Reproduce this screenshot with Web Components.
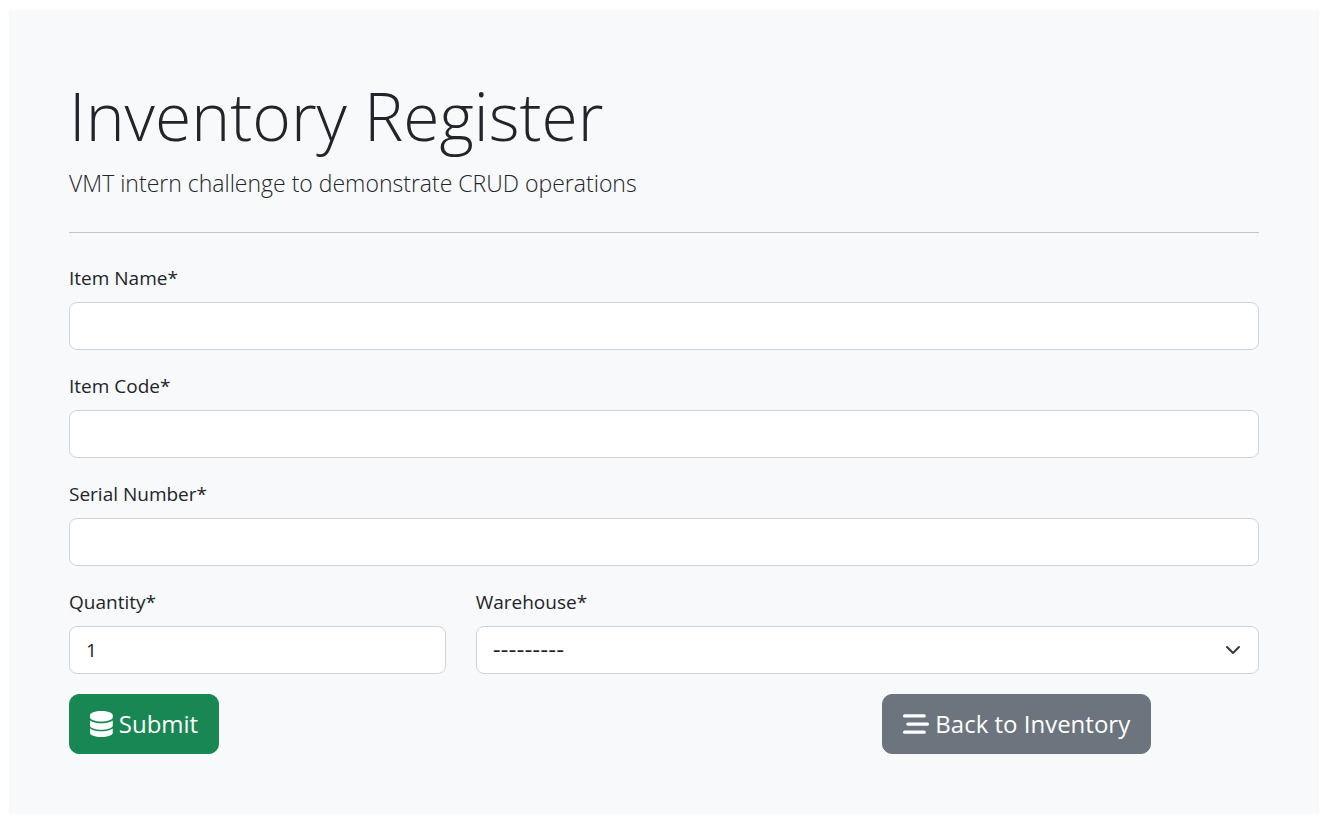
<!DOCTYPE html>
<html lang="en">
<head>
<meta charset="utf-8">
<meta name="viewport" content="width=device-width, initial-scale=1">
<title>Inventory Register</title>
<style>
  body {
    margin: 10px 11px 10px 9px;
    background: #fff;
    color: #212529;
    font-family: "Segoe UI", "Open Sans", "Noto Sans", sans-serif;
    font-size: 19px;
    line-height: 30px;
  }
</style>
</head>
<body>
<inventory-page></inventory-page>

<script>
class BaseElement extends HTMLElement {
  render(html) {
    const template = document.createElement('template');
    template.innerHTML = html;
    this.attachShadow({ mode: 'open' }).append(template.content.cloneNode(true));
  }
}

const controlStyle = `
  :host { display: block; margin-bottom: 20px; }
  label { display: block; margin-bottom: 8px; line-height: 32px; }
  input, select {
    display: block; box-sizing: border-box; width: 100%; height: 48px;
    margin: 0; padding: 0 16px; border: 1px solid #ced4da; border-radius: 8px;
    background-color: #fff; color: inherit; font: inherit; appearance: none;
  }
  input:focus, select:focus { outline: 0; border-color: #86b7fe; box-shadow: 0 0 0 4px #0d6efd40; }
`;

/* Page heading with a slotted subtitle */
customElements.define('page-header', class extends BaseElement {
  connectedCallback() {
    this.render(`
      <style>
        :host { display: block; border-bottom: 1px solid #c1c3c5; padding-bottom: 30px; margin-bottom: 29px; }
        h1 { margin: 0 0 4px; font-size: 66px; line-height: 90px; font-weight: 300; }
        p { margin: 0; font-size: 23px; line-height: 38px; font-weight: 300; }
      </style>
      <h1><slot name="title"></slot></h1>
      <p><slot></slot></p>`);
  }
});

/* Labelled text or number input */
customElements.define('text-field', class extends BaseElement {
  connectedCallback() {
    this.render(`
      <style>${controlStyle}
        input::-webkit-inner-spin-button { appearance: none; margin: 0; }
      </style>
      <label for="control"></label>
      <input id="control" required>`);
    this.shadowRoot.querySelector('label').textContent = this.getAttribute('label') + '*';
    const input = this.shadowRoot.querySelector('input');
    input.type = this.getAttribute('type') || 'text';
    input.value = this.getAttribute('value') || '';
  }
});

/* Labelled drop-down */
customElements.define('select-field', class extends BaseElement {
  connectedCallback() {
    this.render(`
      <style>${controlStyle}
        .box { display: grid; align-items: center; }
        .box > * { grid-area: 1 / 1; }
        select { font-family: "DejaVu Sans", sans-serif; font-size: 22px; }
        svg { justify-self: end; width: 16px; height: 16px; margin-right: 18px; pointer-events: none; }
      </style>
      <label for="control"></label>
      <div class="box">
        <select id="control" required><option value="">---------</option></select>
        <svg viewBox="0 0 16 16" aria-hidden="true"><path d="m2 5 6 6 6-6" fill="none" stroke="#343a40" stroke-width="2" stroke-linecap="round" stroke-linejoin="round"/></svg>
      </div>`);
    this.shadowRoot.querySelector('label').textContent = this.getAttribute('label') + '*';
  }
});

const actionStyle = `
  :host { display: inline-block; vertical-align: top; }
  button, a {
    display: inline-flex; align-items: center; gap: 6px; box-sizing: border-box;
    height: 60px; margin: 0; padding: 0 20px; border: 1px solid; border-radius: 10px;
    color: #fff; font: inherit; font-size: 24px; line-height: 38px;
    text-decoration: none; white-space: nowrap; cursor: pointer;
  }
  svg { height: 26px; fill: #fff; flex: none; }
`;

customElements.define('submit-button', class extends BaseElement {
  connectedCallback() {
    this.render(`
      <style>${actionStyle} button { background: #198754; border-color: #198754; }</style>
      <button type="submit">
        <svg viewBox="0 0 448 512" aria-hidden="true"><path d="M448 80v48c0 44.200-100.300 80-224 80S0 172.200 0 128V80C0 35.800 100.300 0 224 0s224 35.800 224 80zM393.200 214.700c20.800-7.400 39.900-16.900 54.800-28.600V288c0 44.200-100.300 80-224 80S0 332.200 0 288V186.100c14.900 11.800 34 21.200 54.800 28.600C99.700 230.700 159.500 240 224 240s124.300-9.300 169.200-25.300zM0 346.100c14.900 11.800 34 21.200 54.800 28.600C99.700 390.700 159.500 400 224 400s124.300-9.300 169.200-25.300c20.800-7.400 39.900-16.900 54.800-28.600V432c0 44.200-100.300 80-224 80S0 476.200 0 432V346.100z"/></svg>
        <span><slot></slot></span>
      </button>`);
  }
});

customElements.define('back-link', class extends BaseElement {
  connectedCallback() {
    this.render(`
      <style>${actionStyle} a { background: #6c757d; border-color: #6c757d; }</style>
      <a href="#inventory">
        <svg viewBox="0 0 512 512" aria-hidden="true"><rect y="64" width="448" height="64" rx="32"/><rect x="64" y="224" width="448" height="64" rx="32"/><rect y="384" width="448" height="64" rx="32"/></svg>
        <span><slot></slot></span>
      </a>`);
  }
});

/* One-third / two-thirds row with 30px gutters */
customElements.define('split-row', class extends BaseElement {
  connectedCallback() {
    this.render(`
      <style>
        :host { display: grid; grid-template-columns: 1fr 2fr; margin: 0 -15px; }
        :host([wide-first]) { grid-template-columns: 2fr 1fr; }
        ::slotted(*) { margin-left: 15px; margin-right: 15px; min-width: 0; }
        :host([wide-first]) ::slotted(*) { justify-self: start; }
      </style>
      <slot></slot>`);
  }
});

customElements.define('inventory-page', class extends BaseElement {
  connectedCallback() {
    this.render(`
      <style>
        :host { display: block; background: #f8f9fb; padding: 60px; }
        form { margin: 0; }
      </style>
      <main>
        <page-header><span slot="title">Inventory Register</span>VMT intern challenge to demonstrate CRUD operations</page-header>
        <form>
          <text-field label="Item Name"></text-field>
          <text-field label="Item Code"></text-field>
          <text-field label="Serial Number"></text-field>
          <split-row>
            <text-field label="Quantity" type="number" value="1"></text-field>
            <select-field label="Warehouse"></select-field>
          </split-row>
          <split-row wide-first>
            <submit-button>Submit</submit-button>
            <back-link>Back to Inventory</back-link>
          </split-row>
        </form>
      </main>`);
  }
});
</script>
</body>
</html>
